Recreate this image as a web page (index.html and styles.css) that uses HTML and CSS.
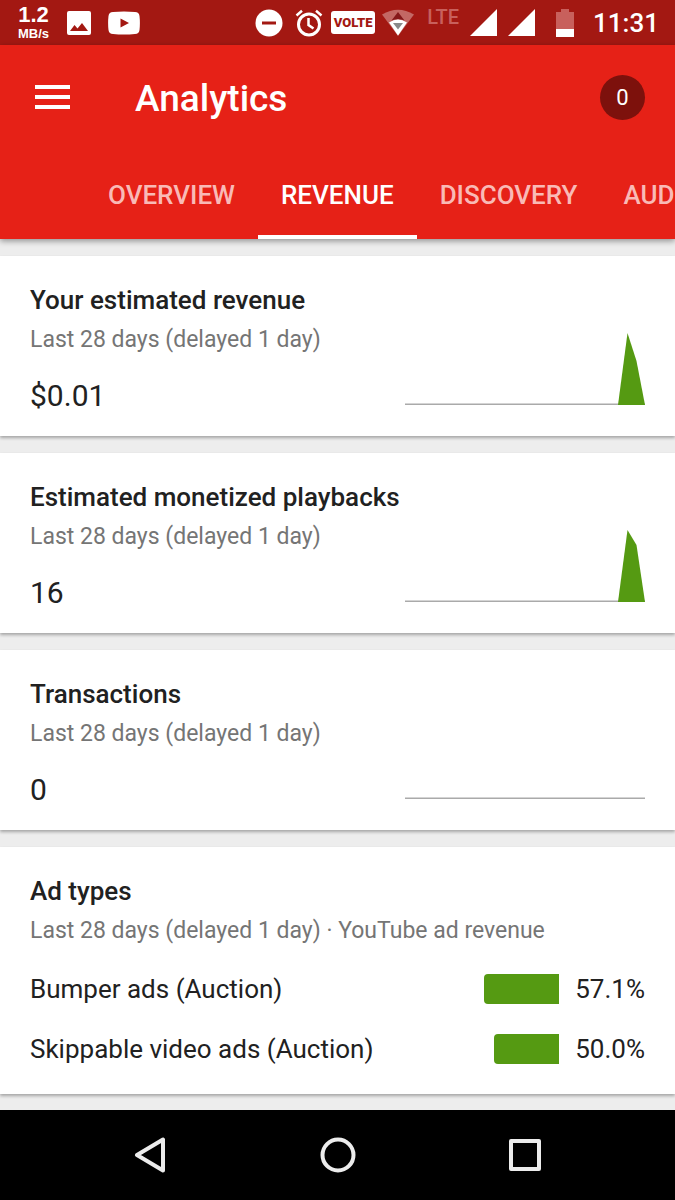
FILE: index.html
```html
<!DOCTYPE html>
<html lang="en">
<head>
<meta charset="utf-8">
<meta name="viewport" content="width=device-width, initial-scale=1">
<title>Analytics</title>
<link rel="stylesheet" href="styles.css">
</head>
<body>
<div class="screen">
  <div class="status-bar">
    <div class="status-group status-left">
      <div class="net-speed"><span class="net-value">1.2</span><span class="net-unit">MB/s</span></div>
      <svg width="24" height="24" viewBox="0 0 24 24" aria-hidden="true"><path fill="#fff" fill-rule="evenodd" d="M2 0h20a2 2 0 0 1 2 2v20a2 2 0 0 1-2 2H2a2 2 0 0 1-2-2V2a2 2 0 0 1 2-2zM3 20h18l-6-8-4.500 5.500L7.500 14z"/></svg>
      <svg width="32" height="24" viewBox="0 0 32 24" aria-hidden="true"><path fill="#fff" fill-rule="evenodd" d="M5 1Q16 0 27 1q4 0 4.500 4 .800 7 0 14-.500 4-4.500 4-11 1-22 0-4 0-4.500-4-.800-7 0-14Q1 1 5 1zM12.500 7.500v9l8.500-4.500z"/></svg>
    </div>
    <div class="status-group">
      <svg width="28" height="28" viewBox="0 0 28 28" aria-hidden="true"><circle cx="14" cy="14" r="13.500" fill="#fff"/><path fill="#a31812" d="M7 12.500h14v3H7z"/></svg>
      <svg class="alarm" width="28" height="28" viewBox="0 0 28 28" fill="none" stroke="#fff" aria-hidden="true"><circle cx="14" cy="15.500" r="10.500" stroke-width="3"/><path stroke-width="2.500" d="M13.500 9v7l5 3.500M1.500 6.500 7 1.800M26.500 6.500 21 1.800"/></svg>
      <span class="volte">VOLTE</span>
      <svg class="wifi" width="34" height="28" viewBox="0 0 34 28" aria-hidden="true"><path fill="#fff" opacity=".35" d="M1 5.500Q17-4 33 5.500L17 27z"/><path fill="#fff" d="M8 13.500q9-6 18 0L17 26.500z"/><path fill="#85181a" d="m17 3 6.500 8.500q-6.500-3-13 0z"/><path fill="#8a8a8a" d="M12 14h10l-5 6.500z"/></svg>
      <span class="lte">LTE</span>
      <svg class="signal" width="27" height="27" viewBox="0 0 27 27" aria-hidden="true"><path fill="#fff" d="M27 0v27H0z"/></svg>
      <svg class="signal" width="27" height="27" viewBox="0 0 27 27" aria-hidden="true"><path fill="#fff" d="M27 0v27H0z"/></svg>
      <svg class="battery" width="18" height="28" viewBox="0 0 18 28" aria-hidden="true"><path fill="#c8605c" d="M5 0h8v3h5v18H0V3h5z"/><path fill="#fff" d="M0 20h18v8H0z"/></svg>
      <span class="clock">11:31</span>
    </div>
  </div>

  <header class="app-header">
    <div class="toolbar">
      <button class="menu-button" type="button" aria-label="Open menu">
        <svg width="35" height="24" viewBox="0 0 35 24" aria-hidden="true"><path fill="#fff" d="M0 0h35v4H0zM0 10h35v4H0zM0 20h35v4H0z"/></svg>
      </button>
      <h1 class="page-title">Analytics</h1>
      <button class="account-button" type="button" aria-label="Account 0">0</button>
    </div>
    <nav class="tabs" aria-label="Analytics sections">
      <a class="tab" href="#overview">OVERVIEW</a>
      <a class="tab tab-active" href="#revenue" aria-current="page">REVENUE</a>
      <a class="tab" href="#discovery">DISCOVERY</a>
      <a class="tab" href="#audience">AUDIENCE</a>
    </nav>
  </header>

  <main class="cards">
    <section class="card">
      <h2 class="card-title">Your estimated revenue</h2>
      <div class="card-body">
        <div>
          <p class="card-subtitle">Last 28 days (delayed 1 day)</p>
          <p class="card-value">$0.01</p>
        </div>
        <svg class="sparkline" width="240" height="72" viewBox="0 0 240 72" aria-hidden="true"><path fill="#aaa" d="M0 70.500h240V72H0z"/><path fill="#559a12" d="M213 72 222.500 0 231.500 28 240 72z"/></svg>
      </div>
    </section>
    <section class="card">
      <h2 class="card-title">Estimated monetized playbacks</h2>
      <div class="card-body">
        <div>
          <p class="card-subtitle">Last 28 days (delayed 1 day)</p>
          <p class="card-value">16</p>
        </div>
        <svg class="sparkline" width="240" height="72" viewBox="0 0 240 72" aria-hidden="true"><path fill="#aaa" d="M0 70.500h240V72H0z"/><path fill="#559a12" d="M213 72 222.500 0 231.500 15 240 72z"/></svg>
      </div>
    </section>
    <section class="card">
      <h2 class="card-title">Transactions</h2>
      <div class="card-body">
        <div>
          <p class="card-subtitle">Last 28 days (delayed 1 day)</p>
          <p class="card-value">0</p>
        </div>
        <svg class="sparkline" width="240" height="72" viewBox="0 0 240 72" aria-hidden="true"><path fill="#aaa" d="M0 70.500h240V72H0z"/></svg>
      </div>
    </section>
    <section class="card card-ads">
      <h2 class="card-title">Ad types</h2>
      <p class="card-subtitle">Last 28 days (delayed 1 day) · YouTube ad revenue</p>
      <table class="ad-table">
        <tbody>
          <tr>
            <th scope="row">Bumper ads (Auction)</th>
            <td class="bar-cell"><div class="bar" style="width:57.1%"></div></td>
            <td class="percent">57.1%</td>
          </tr>
          <tr>
            <th scope="row">Skippable video ads (Auction)</th>
            <td class="bar-cell"><div class="bar" style="width:50%"></div></td>
            <td class="percent">50.0%</td>
          </tr>
        </tbody>
      </table>
    </section>
  </main>

  <div class="nav-bar">
    <button class="nav-button" type="button" aria-label="Back"><svg width="36" height="36" viewBox="0 0 36 36" aria-hidden="true"><path d="M31 2.500v31L5 18z"/></svg></button>
    <button class="nav-button" type="button" aria-label="Home"><svg width="36" height="36" viewBox="0 0 36 36" aria-hidden="true"><circle cx="18" cy="18" r="15.500"/></svg></button>
    <button class="nav-button" type="button" aria-label="Recent apps"><svg width="36" height="36" viewBox="0 0 36 36" aria-hidden="true"><path d="M4 4h28v28H4z"/></svg></button>
  </div>
</div>
</body>
</html>
```
FILE: styles.css
```css
* {
  box-sizing: border-box;
}

body {
  margin: 0;
  font-family: Roboto, "Liberation Sans", sans-serif;
  color: #212121;
  background: #ededed;
}

h1, h2, p {
  margin: 0;
  font-weight: 500;
}

button {
  padding: 0;
  border: 0;
  background: none;
  font: inherit;
  color: inherit;
}

svg {
  display: block;
  flex: none;
}

.screen {
  display: flex;
  flex-direction: column;
  min-height: 100vh;
  overflow: hidden;
}

/* Status bar */
.status-bar {
  display: flex;
  justify-content: space-between;
  height: 45px;
  padding: 0 16px 0 17px;
  background: #a31812;
  color: #fff;
}

.status-group {
  display: flex;
  align-items: center;
}

.status-left {
  gap: 17px;
}

.net-speed {
  display: flex;
  flex-direction: column;
  align-items: center;
  width: 33px;
  font-family: "Liberation Sans", sans-serif;
  font-weight: 700;
}

.net-value {
  font-size: 22px;
  line-height: 22px;
}

.net-unit {
  font-size: 13px;
  line-height: 15px;
}

.alarm {
  margin-left: 12px;
}

.volte {
  margin-left: 8px;
  width: 44px;
  border-radius: 3px;
  background: #fff;
  color: #a31812;
  font-size: 13px;
  line-height: 23px;
  font-weight: 900;
  text-align: center;
}

.wifi {
  margin-left: 6px;
}

.lte {
  align-self: flex-start;
  margin: 7px 0 0 12px;
  color: #c8605c;
  font-size: 20px;
  line-height: 20px;
  font-weight: 500;
}

.signal {
  margin-left: 11px;
}

.battery {
  margin-left: 21px;
}

.clock {
  margin-left: 19px;
  font-size: 26px;
  font-weight: 500;
}

/* App header */
.app-header {
  position: relative;
  background: #e62117;
  color: #fff;
  box-shadow: 0 2px 6px rgba(0, 0, 0, 0.4);
}

.toolbar {
  display: flex;
  align-items: center;
  height: 104px;
  padding: 0 30px 0 35px;
}

.menu-button {
  width: 100px;
}

.page-title {
  flex: 1;
  padding-top: 3px;
  font-size: 37px;
  line-height: 44px;
}

.account-button {
  width: 45px;
  height: 45px;
  border-radius: 50%;
  background: #7d110c;
  font-size: 22px;
}

.tabs {
  display: flex;
  height: 90px;
  padding-left: 85px;
  overflow: hidden;
}

.tab {
  flex: none;
  padding: 6px 23px 0;
  border-bottom: 4px solid transparent;
  color: #f9bab6;
  font-size: 26px;
  line-height: 80px;
  font-weight: 500;
  text-decoration: none;
}

.tab-active {
  border-color: #fff;
  color: #fff;
}

/* Cards */
.cards {
  display: flex;
  flex: 1;
  flex-direction: column;
  gap: 17px;
  padding: 17px 0 16px;
}

.card {
  padding: 28px 30px 22px;
  background: #fff;
  box-shadow: 0 2px 3px rgba(0, 0, 0, 0.3);
}

.card-title {
  font-size: 26px;
  line-height: 32px;
}

.card-body {
  display: flex;
  align-items: flex-end;
  justify-content: space-between;
}

.card-subtitle {
  margin-top: 10px;
  color: #757575;
  font-size: 23px;
  line-height: 28px;
  font-weight: 400;
}

.card-value {
  margin-top: 24px;
  font-size: 30px;
  line-height: 36px;
  font-weight: 400;
}

.sparkline {
  margin-bottom: 9px;
}

.card-ads {
  padding-bottom: 15px;
}

.ad-table {
  width: 100%;
  margin-top: 14px;
  border-collapse: collapse;
  font-size: 26px;
  line-height: 32px;
}

.ad-table tr {
  height: 60px;
}

.ad-table th,
.ad-table td {
  padding: 0;
  font-weight: 400;
  text-align: left;
}

.ad-table .bar-cell {
  width: 131px;
}

.bar {
  height: 30px;
  margin-left: auto;
  border-radius: 4px 0 0 4px;
  background: #559a12;
}

.ad-table .percent {
  width: 86px;
  text-align: right;
}

/* System navigation */
.nav-bar {
  position: relative;
  display: flex;
  align-items: center;
  justify-content: space-evenly;
  height: 90px;
  background: #000;
}

.nav-button {
  display: flex;
  justify-content: center;
  width: 75px;
}

.nav-button svg {
  fill: none;
  stroke: #ececec;
  stroke-width: 4;
  stroke-linejoin: round;
}
```
